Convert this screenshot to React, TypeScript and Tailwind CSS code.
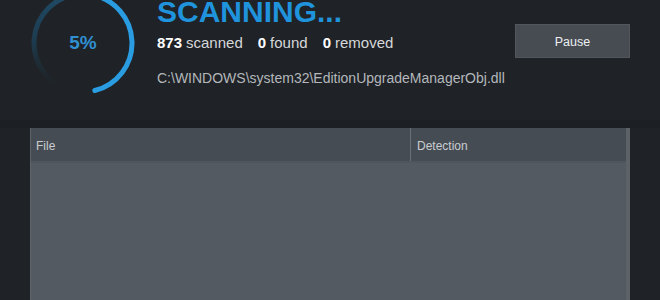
import React from "react";

function polar(cx: number, cy: number, r: number, deg: number) {
  const a = ((deg - 90) * Math.PI) / 180;
  return [cx + r * Math.cos(a), cy + r * Math.sin(a)];
}
function arc(cx: number, cy: number, r: number, a0: number, a1: number) {
  const [x0, y0] = polar(cx, cy, r, a0);
  const [x1, y1] = polar(cx, cy, r, a1);
  const large = a1 - a0 > 180 ? 1 : 0;
  return `M ${x0} ${y0} A ${r} ${r} 0 ${large} 1 ${x1} ${y1}`;
}

function Ring() {
  return (
    <div className="relative w-[110px] h-[100px] shrink-0">
      <svg width="110" height="100" viewBox="0 0 110 100" className="absolute left-0 top-0">
        <defs>
          <linearGradient id="dim" x1="0" y1="1" x2="0" y2="0">
            <stop offset="0" stopColor="#1c2a33" stopOpacity="0" />
            <stop offset="0.5" stopColor="#1d3b4e" />
            <stop offset="1" stopColor="#1f4a66" />
          </linearGradient>
        </defs>
        <path d={arc(55, 43, 49, 195, 355)} stroke="url(#dim)" strokeWidth="5" fill="none" />
        <path d={arc(55, 43, 49, 10, 166)} stroke="#2a9de2" strokeWidth="5" fill="none" strokeLinecap="round" />
      </svg>
      <div className="absolute left-0 top-[31px] w-[110px] text-center text-[19px] font-bold text-[#2f8fd0] leading-[24px]">
        5%
      </div>
    </div>
  );
}

export default function App() {
  return (
    <div
      className="w-[660px] h-[300px] bg-[#1f2226] overflow-hidden flex flex-col"
      style={{ fontFamily: '"Liberation Sans", Arial, sans-serif' }}
    >
      <div className="flex h-[120px] pl-[28px]">
        <Ring />
        <div className="flex flex-col pl-[19px] -mt-[6px]">
          <div className="text-[30px] font-bold text-[#1f93dc] leading-[36px]">SCANNING...</div>
          <div className="flex items-baseline gap-[4px] text-[15px] text-[#d6d8da] mt-[4px] leading-[18px]">
            <span className="font-bold text-white">873</span>
            <span>scanned</span>
            <span className="font-bold text-white ml-[11px]">0</span>
            <span>found</span>
            <span className="font-bold text-white ml-[11px]">0</span>
            <span>removed</span>
          </div>
          <div className="text-[14px] text-[#b4b8bc] mt-[17px] leading-[18px]">
            C:\WINDOWS\system32\EditionUpgradeManagerObj.dll
          </div>
        </div>
        <div className="flex-1" />
        <button className="mt-[24px] mr-[30px] w-[115px] h-[34px] pt-[2px] bg-[#474c53] border border-[#52575e] text-[12.5px] text-[#eef0f2]">
          Pause
        </button>
      </div>
      <div className="h-[8px] bg-[#1c1f23]" />
      <div className="mx-[30px] flex-1 flex flex-col bg-[#545a62] border-l border-[#5e636a] border-r-[4px] border-r-[#5d6269]">
        <div className="h-[35px] bg-[#464c53] flex text-[12px] text-[#c9cdd1] border-b-2 border-[#50565d]">
          <div className="w-[380px] border-r border-[#6a7077] pl-[5px] pt-[2px] flex items-center">File</div>
          <div className="flex-1 pl-[6px] pt-[2px] flex items-center">Detection</div>
        </div>
      </div>
    </div>
  );
}
